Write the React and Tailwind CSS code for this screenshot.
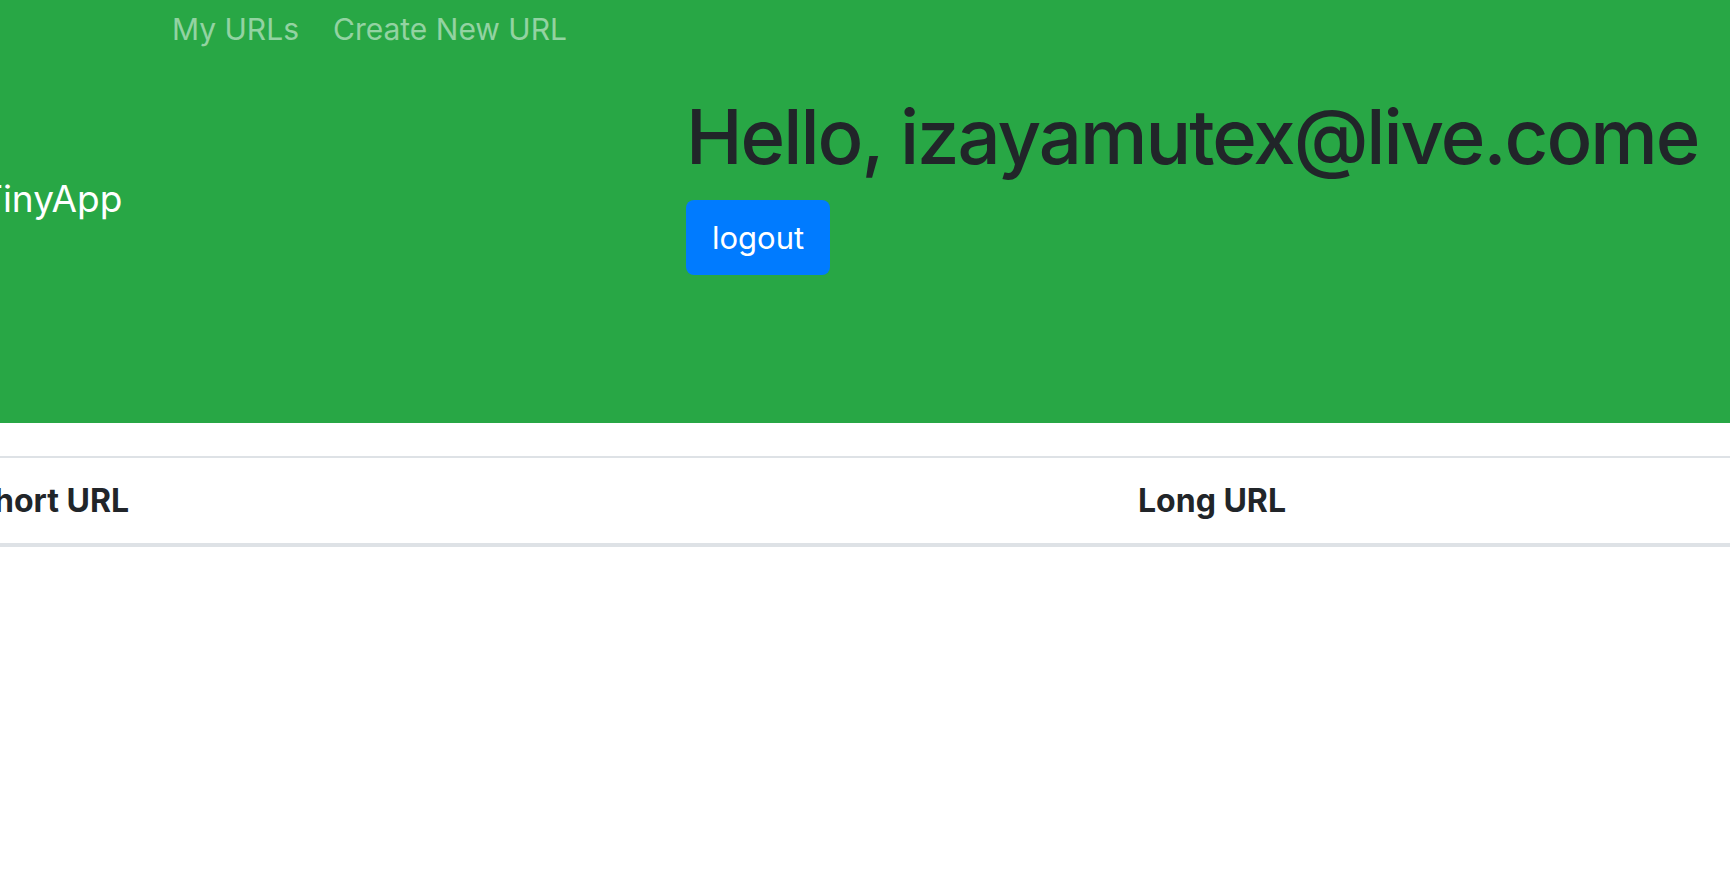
export default function App() {
  return (
    <div className="min-h-[876px] bg-white overflow-hidden font-['Inter','Liberation_Sans',sans-serif] text-[#212529]">
      <header className="h-[423px] bg-[#28a745] flex">
        <div className="w-[193px] shrink-0 flex items-center -ml-[21px] pb-[26px]">
          <span className="text-[37px] leading-[60px] text-white whitespace-nowrap">TinyApp</span>
        </div>
        <nav className="flex items-start pt-[7px] -ml-[17px] w-[531px] shrink-0">
          <a className="px-[17px] text-[30px] leading-[45px] text-white/50 whitespace-nowrap">My URLs</a>
          <a className="px-[17px] text-[30px] leading-[45px] text-white/50 whitespace-nowrap">Create New URL</a>
        </nav>
        <div className="pt-[90px]">
          <h1 className="text-[76px] leading-[92px] font-medium tracking-[-2px] whitespace-nowrap">Hello, izayamutex@live.come</h1>
          <button className="mt-[18px] h-[75px] px-[26px] rounded-[8px] bg-[#007bff] text-white text-[31px] leading-[46px]">logout</button>
        </div>
      </header>
      <div className="mt-[33px] border-t-2 border-[#dee2e6]">
        <div className="grid grid-cols-[1114px_1fr] h-[89px] items-center border-b-4 border-[#dee2e6] font-bold text-[32px]">
          <div className="-ml-[27px] whitespace-nowrap">Short URL</div>
          <div className="pl-[24px] whitespace-nowrap">Long URL</div>
        </div>
      </div>
    </div>
  );
}
